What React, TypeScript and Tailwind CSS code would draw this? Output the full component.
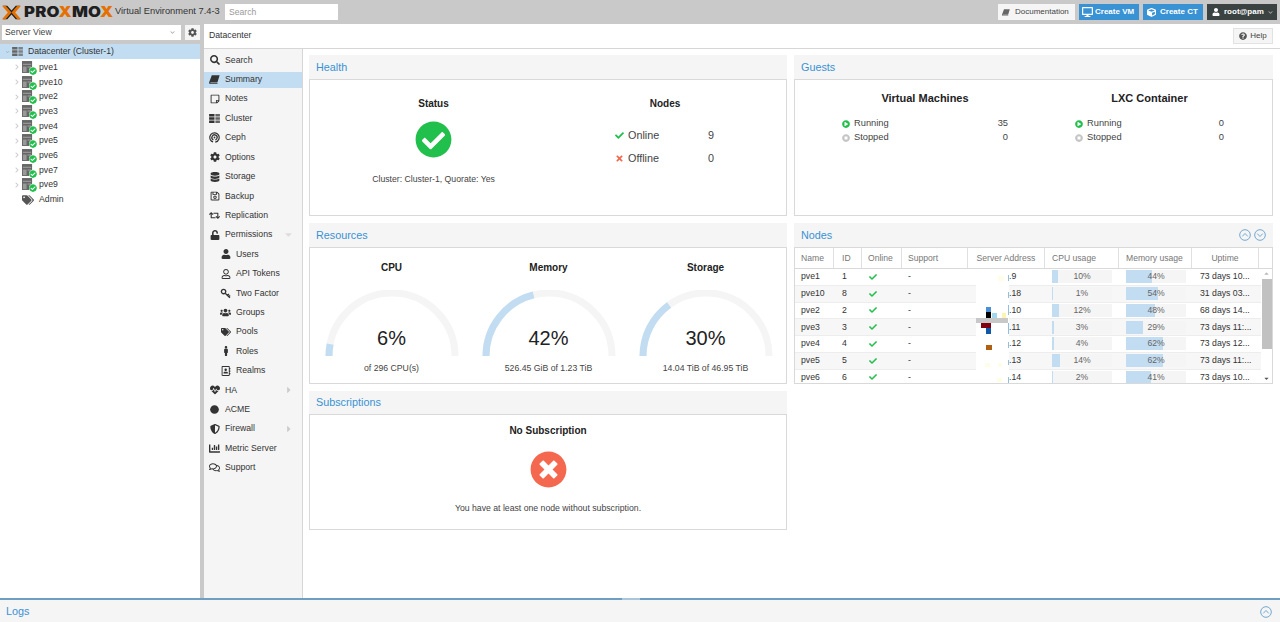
import React from "react";
import {
  FaSearch, FaRegStickyNote, FaCog, FaDatabase, FaRegSave, FaRetweet, FaUnlock, FaUser, FaRegUser,
  FaUsers, FaTags, FaMale, FaRegAddressBook, FaHeartbeat, FaCircle, FaShieldAlt, FaChartBar, FaRegComments,
  FaDesktop, FaCube, FaQuestionCircle, FaCheckCircle, FaCheck, FaTimes, FaTimesCircle, FaPlayCircle, FaStopCircle,
  FaChevronDown, FaChevronRight, FaCaretDown, FaCaretRight, FaCaretUp,
} from "react-icons/fa";

const Ceph = () => (
  <svg viewBox="0 0 20 20" className="w-[11px] h-[11px]" fill="none" stroke="#333" strokeWidth="2.2">
    <circle cx="10" cy="10" r="8.5" strokeDasharray="48 5.4" transform="rotate(108 10 10)" />
    <circle cx="10" cy="10" r="4.8" strokeDasharray="26 4.2" transform="rotate(115 10 10)" />
    <circle cx="10" cy="10" r="1.6" fill="#333" stroke="none" />
  </svg>
);

const SlantBook = ({ className }: { className: string }) => (
  <svg viewBox="0 0 12 10" className={className} fill="currentColor">
    <path d="M3 .3h8.7L9.2 8.4H1.9C.9 8.4.9 9.3 1.9 9.3h7.6l-.2.7H1.1C-.3 10-.2 8.2.5 7z" />
  </svg>
);

const ClusterIcon = ({ className }: { className: string }) => (
  <svg viewBox="0 0 12 10" className={className} fill="currentColor">
    <rect x="0" y="0" width="6" height="2.8" />
    <rect x="0" y="3.6" width="6" height="2.8" />
    <rect x="0" y="7.2" width="6" height="2.8" />
    <rect x="7" y="0" width="5" height="2.8" opacity="0.75" />
    <rect x="7" y="3.6" width="5" height="2.8" opacity="0.75" />
    <rect x="7" y="7.2" width="5" height="2.8" opacity="0.75" />
  </svg>
);

const NodeIcon = () => (
  <svg viewBox="0 0 12 13" className="w-[11px] h-[12px]">
    <rect width="11" height="13" fill="#666" />
    <rect x="1" y="3" width="9" height="1" fill="#aaa" />
    <rect x="1" y="6" width="4" height="6" fill="#999" />
    <rect x="6" y="6" width="4" height="1" fill="#aaa" />
  </svg>
);

const KeyIcon = () => (
  <svg viewBox="0 0 20 20" className="w-[11px] h-[11px]" fill="none" stroke="#333" strokeWidth="2.4">
    <circle cx="6.5" cy="6.5" r="4" />
    <path d="M9.5 9.5 18 18M13.5 13.5l2.8-2.4M16 16l2.4-2.2" />
  </svg>
);

const Logo = () => (
  <svg viewBox="0 0 36 28" className="w-[19px] h-[15px] shrink-0">
    <path d="M2 1h8l8 9 8-9h8L22 14l12 13h-8l-8-9-8 9H2l12-13z" fill="#1f1f1f" />
    <path d="M0 1h7l11 13L7 27H0l11-13z" fill="#e57000" />
    <path d="M36 1h-7L18 14l11 13h7L25 14z" fill="#e57000" />
  </svg>
);

const nav: { label: string; icon: React.ReactNode; sub?: boolean; chev?: "down" | "right"; selected?: boolean }[] = [
  { label: "Search", icon: <FaSearch /> },
  { label: "Summary", icon: <SlantBook className="w-[11px] h-[9px]" />, selected: true },
  { label: "Notes", icon: <FaRegStickyNote /> },
  { label: "Cluster", icon: <ClusterIcon className="w-[11px] h-[9px]" /> },
  { label: "Ceph", icon: <Ceph /> },
  { label: "Options", icon: <FaCog /> },
  { label: "Storage", icon: <FaDatabase /> },
  { label: "Backup", icon: <FaRegSave /> },
  { label: "Replication", icon: <FaRetweet className="w-[11px] h-[11px]" /> },
  { label: "Permissions", icon: <FaUnlock />, chev: "down" },
  { label: "Users", icon: <FaUser />, sub: true },
  { label: "API Tokens", icon: <FaRegUser />, sub: true },
  { label: "Two Factor", icon: <KeyIcon />, sub: true },
  { label: "Groups", icon: <FaUsers className="w-[11px] h-[11px]" />, sub: true },
  { label: "Pools", icon: <FaTags />, sub: true },
  { label: "Roles", icon: <FaMale />, sub: true },
  { label: "Realms", icon: <FaRegAddressBook />, sub: true },
  { label: "HA", icon: <FaHeartbeat />, chev: "right" },
  { label: "ACME", icon: <FaCircle className="w-[9px] h-[9px]" /> },
  { label: "Firewall", icon: <FaShieldAlt />, chev: "right" },
  { label: "Metric Server", icon: <FaChartBar className="w-[11px] h-[11px]" /> },
  { label: "Support", icon: <FaRegComments className="w-[11px] h-[11px]" /> },
];

const nodes = [
  { name: "pve1", id: 1, addr: ".9", cpu: 10, mem: 44, up: "73 days 10..." },
  { name: "pve10", id: 8, addr: ".18", cpu: 1, mem: 54, up: "31 days 03..." },
  { name: "pve2", id: 2, addr: ".10", cpu: 12, mem: 48, up: "68 days 14..." },
  { name: "pve3", id: 3, addr: ".11", cpu: 3, mem: 29, up: "73 days 11:..." },
  { name: "pve4", id: 4, addr: ".12", cpu: 4, mem: 62, up: "73 days 12..." },
  { name: "pve5", id: 5, addr: ".13", cpu: 14, mem: 62, up: "73 days 11:..." },
  { name: "pve6", id: 6, addr: ".14", cpu: 2, mem: 41, up: "73 days 10..." },
];

const TreeNode = ({ label }: { label: string }) => (
  <div className="h-[14.7px] flex items-center pl-[15px] text-[8.7px] text-[#333]">
    <FaChevronRight className="w-[4px] h-[6px] text-[#ccc] mr-[3px]" />
    <span className="relative w-[13px] h-[13px] mr-[4px] shrink-0">
      <NodeIcon />
      <FaCheckCircle className="absolute right-[-2px] bottom-[-1px] w-[8px] h-[8px] text-[#21bf4b] bg-white rounded-full" />
    </span>
    <span>{label}</span>
  </div>
);

const Panel = ({
  title, className, children, tools, head = "h-[24px]",
}: { title: string; className: string; children: React.ReactNode; tools?: React.ReactNode; head?: string }) => (
  <div className={`flex flex-col ${className}`}>
    <div className={`${head} shrink-0 bg-[#f5f5f5] flex items-center justify-between pl-[7px] pr-[7px] text-[10.8px] text-[#3892d4]`}>
      <span>{title}</span>
      {tools}
    </div>
    <div className="flex-1 min-h-0 overflow-hidden relative bg-white border border-[#d9d9d9]">{children}</div>
  </div>
);

const Gauge = ({ title, pct, sub }: { title: string; pct: number; sub: string }) => {
  const r = 63;
  const c = Math.PI * r;
  const d = `M${70 - r} 66 A${r} ${r} 0 0 1 ${70 + r} 66`;
  return (
    <div className="w-[157px] flex flex-col items-center">
      <div className="h-[13px] mt-[13px] leading-[13px] text-[10px] font-bold text-[#222]">{title}</div>
      <div className="relative w-[140px] h-[66px] mt-[16px]">
        <svg viewBox="0 0 140 66" className="w-[140px] h-[66px]" fill="none" strokeWidth="7">
          <path d={d} stroke="#f5f5f5" />
          <path d={d} stroke="#c2ddf2" strokeDasharray={`${(c * pct) / 100} ${c}`} />
        </svg>
        <div className="absolute left-0 right-0 top-[36px] text-center text-[20px] leading-[24px] text-[#222]">{pct}%</div>
      </div>
      <div className="mt-[6px] text-[8.7px] leading-[12px] text-[#444]">{sub}</div>
    </div>
  );
};

const GuestCol = ({ title, run, stop, className }: { title: string; run: number; stop: number; className: string }) => (
  <div className={`flex flex-col ${className}`}>
    <div className="text-center text-[11px] font-bold leading-[14px] text-[#222] mt-[11px] mb-[12px]">{title}</div>
    <div className="h-[14px] flex items-center text-[9.3px] text-[#444]">
      <FaPlayCircle className="w-[8px] h-[8px] text-[#21bf4b] mr-[4px]" />
      <span className="flex-1">Running</span>
      <span>{run}</span>
    </div>
    <div className="h-[14px] flex items-center text-[9.3px] text-[#444]">
      <FaStopCircle className="w-[8px] h-[8px] text-[#c4c4c4] mr-[4px]" />
      <span className="flex-1">Stopped</span>
      <span>{stop}</span>
    </div>
  </div>
);

const Bar = ({ pct, mem }: { pct: number; mem?: boolean }) => (
  <div className={`flex items-center ${mem ? "w-[73px] pl-[7px]" : "w-[74px] pl-[7px]"}`}>
    <div className="relative w-[60px] h-[13px] bg-[#f5f5f5] text-center text-[8.6px] leading-[13px] text-[#666]">
      <div className="absolute left-0 top-0 bottom-0 bg-[#c2ddf2]" style={{ width: `${pct}%` }} />
      <span className="relative">{pct}%</span>
    </div>
  </div>
);

const Tool = ({ up }: { up?: boolean }) => (
  <svg viewBox="0 0 14 14" className="w-[12px] h-[12px]" fill="none" stroke="#5d9cc9" strokeWidth="1">
    <circle cx="7" cy="7" r="6.2" />
    <path d={up ? "M3.8 8.6 7 5.2l3.2 3.4" : "M3.8 5.4 7 8.8l3.2-3.4"} />
  </svg>
);

const Head = ({ className, children }: { className: string; children: string }) => (
  <div className={`h-full flex items-center border-r border-[#e0e0e0] text-[8.6px] text-[#777] ${className}`}>{children}</div>
);

const marks = [
  "top-[6px] h-[6px] bg-[#8cc0e8]",
  "top-[23px] h-[6px] bg-[#8cc0e8]",
  "top-[36px] h-[10px] bg-[#8cc0e8]",
  "top-[54px] h-[11px] bg-[#8cc0e8]",
  "top-[73px] h-[6px] bg-[#8cc0e8]",
  "top-[91px] h-[5px] bg-[#8cc0e8]",
  "top-[108px] h-[6px] bg-[#8cc0e8]",
];

export default function App() {
  return (
    <div className="relative w-[1280px] h-[622px] overflow-hidden flex flex-col bg-[#c9c9c9] text-[#333] font-['Liberation_Sans',Arial,sans-serif]">
      {/* top bar */}
      <header className="h-[24px] shrink-0 flex items-center pl-[2px] pr-[3px]">
        <Logo />
        <span className="ml-[3px] w-[91px] text-[14.5px] font-black tracking-[0.2px] leading-none font-['Inter',sans-serif] text-[#1f1f1f] whitespace-nowrap">
          <span className="inline-block origin-left scale-x-[1.15]">
            PRO<span className="text-[#e57000]">X</span>MO<span className="text-[#e57000]">X</span>
          </span>
        </span>
        <span className="w-[110px] text-[9.3px] text-[#333] whitespace-nowrap">Virtual Environment 7.4-3</span>
        <div className="w-[113px] h-[16px] bg-white flex items-center pl-[4px] text-[8.6px] text-[#999]">Search</div>
        <div className="flex-1" />
        <div className="flex gap-[4px] text-[8px]">
          <div className="w-[77px] h-[16px] bg-[#f5f5f5] flex items-center pl-[4px] text-[#444] whitespace-nowrap">
            <SlantBook className="w-[8px] h-[7px] mr-[5px] text-[#666]" />
            Documentation
          </div>
          <div className="w-[60px] h-[16px] bg-[#3892d4] flex items-center pl-[3px] text-white font-bold whitespace-nowrap">
            <FaDesktop className="w-[11px] h-[10px] mr-[2px]" />
            Create VM
          </div>
          <div className="w-[60px] h-[16px] bg-[#3892d4] flex items-center pl-[4px] text-white font-bold whitespace-nowrap">
            <FaCube className="w-[9px] h-[9px] mr-[4px]" />
            Create CT
          </div>
          <div className="w-[70px] h-[16px] bg-[#3b4242] flex items-center pl-[4px] text-white font-bold whitespace-nowrap">
            <FaUser className="w-[8px] h-[8px] mr-[4px] ml-[1px]" />
            root@pam
            <FaChevronDown className="w-[5px] h-[5px] ml-auto mr-[4px] text-[#aaa]" />
          </div>
        </div>
      </header>

      <div className="flex-1 min-h-0 flex">
        {/* resource tree */}
        <aside className="w-[200px] shrink-0 flex flex-col">
          <div className="h-[20px] shrink-0 flex items-start pt-[1px]">
            <div className="ml-[2px] w-[179px] h-[15px] bg-white flex items-center justify-between pl-[3px] pr-[6px] text-[8.7px] text-[#444]">
              Server View
              <FaChevronDown className="w-[5px] h-[5px] text-[#aaa]" />
            </div>
            <div className="ml-[4px] w-[15px] h-[15px] bg-[#f5f5f5] flex items-center justify-center">
              <FaCog className="w-[9px] h-[9px] text-[#555]" />
            </div>
          </div>
          <div className="flex-1 bg-white">
            <div className="h-[15px] bg-[#c2ddf2] flex items-center pl-[5px] text-[8.7px] text-[#333]">
              <FaChevronDown className="w-[5px] h-[4px] text-[#9bb] mr-[1px]" />
              <ClusterIcon className="w-[11px] h-[9px] text-[#666] ml-[1px] mr-[5px]" />
              Datacenter (Cluster-1)
            </div>
            <div className="pt-[1px]">
              {["pve1", "pve10", "pve2", "pve3", "pve4", "pve5", "pve6", "pve7", "pve9"].map((n) => (
                <TreeNode key={n} label={n} />
              ))}
              <div className="h-[14.7px] flex items-center pl-[22px] text-[8.7px] text-[#333]">
                <FaTags className="w-[12px] h-[10px] text-[#555] mr-[5px]" />
                Admin
              </div>
            </div>
          </div>
        </aside>

        {/* center */}
        <div className="ml-[4px] flex-1 min-w-0 flex flex-col bg-white">
          <div className="h-[25px] shrink-0 border-b border-[#d6d6d6] flex items-center justify-between pl-[5px] pr-[7px] text-[8.7px]">
            Datacenter
            <div className="w-[40px] h-[16px] bg-[#f5f5f5] border border-[#e2e2e2] flex items-center justify-center text-[#444] text-[8px]">
              <FaQuestionCircle className="w-[8px] h-[8px] mr-[3px] text-[#555]" />
              Help
            </div>
          </div>
          <div className="flex-1 min-h-0 flex">
            <nav className="w-[99px] shrink-0 bg-[#f5f5f5] border-r border-[#d6d6d6] pt-[1.5px]">
              {nav.map((n) => (
                <div key={n.label} className="h-[19.42px] flex items-center">
                  <div className={`w-full h-[16px] flex items-center text-[8.7px] text-[#333] ${n.selected ? "bg-[#c2ddf2]" : ""} ${n.sub ? "pl-[16px]" : "pl-[5px]"}`}>
                    <span className="w-[11px] h-[11px] mr-[5px] flex items-center justify-center text-[10px] text-[#333] shrink-0">{n.icon}</span>
                    <span className="flex-1">{n.label}</span>
                    {n.chev === "down" && <FaCaretDown className="w-[11px] h-[11px] text-[#ddd] mr-[8px]" />}
                    {n.chev === "right" && <FaCaretRight className="w-[10px] h-[10px] text-[#ccc] mr-[8px]" />}
                  </div>
                </div>
              ))}
            </nav>

            <main className="flex-1 min-w-0 flex gap-[7px] pl-[6px] pr-[7px] pt-[6px]">
              <div className="w-[478px] flex flex-col gap-[7px]">
                <Panel title="Health" className="h-[161px]">
                  <div className="flex">
                    <div className="w-[247px] flex flex-col items-center">
                      <div className="mt-[17px] text-[10px] font-bold leading-[13px] text-[#222]">Status</div>
                      <FaCheckCircle className="mt-[11px] w-[37px] h-[37px] text-[#21bf4b]" />
                      <div className="mt-[15px] text-[8.7px] leading-[12px] text-[#444]">Cluster: Cluster-1, Quorate: Yes</div>
                    </div>
                    <div className="w-[216px] flex flex-col">
                      <div className="mt-[17px] text-center text-[10px] font-bold leading-[13px] text-[#222]">Nodes</div>
                      <div className="mt-[14px] h-[23px] flex items-center pl-[58px] text-[10.8px] text-[#444]">
                        <FaCheck className="w-[9px] h-[9px] text-[#21bf4b] mr-[4px]" />
                        <span className="w-[80px]">Online</span>
                        <span>9</span>
                      </div>
                      <div className="h-[23px] flex items-center pl-[58px] text-[10.8px] text-[#444]">
                        <FaTimes className="w-[9px] h-[9px] text-[#f4684f] mr-[4px]" />
                        <span className="w-[80px]">Offline</span>
                        <span>0</span>
                      </div>
                    </div>
                  </div>
                </Panel>
                <Panel title="Resources" className="h-[161px]">
                  <div className="flex pl-[3px]">
                    <Gauge title="CPU" pct={6} sub="of 296 CPU(s)" />
                    <Gauge title="Memory" pct={42} sub="526.45 GiB of 1.23 TiB" />
                    <Gauge title="Storage" pct={30} sub="14.04 TiB of 46.95 TiB" />
                  </div>
                </Panel>
                <Panel title="Subscriptions" className="h-[139px]" head="h-[23px]">
                  <div className="flex flex-col items-center">
                    <div className="mt-[9px] text-[10px] font-bold leading-[14px] text-[#222]">No Subscription</div>
                    <FaTimesCircle className="mt-[13px] w-[37px] h-[37px] text-[#f4684f]" />
                    <div className="mt-[14px] text-[8.7px] leading-[12px] text-[#444]">You have at least one node without subscription.</div>
                  </div>
                </Panel>
              </div>

              <div className="w-[479px] flex flex-col gap-[7px]">
                <Panel title="Guests" className="h-[161px]">
                  <div className="flex pl-[47px]">
                    <GuestCol title="Virtual Machines" run={35} stop={0} className="w-[166px]" />
                    <GuestCol title="LXC Container" run={0} stop={0} className="w-[149px] ml-[67px]" />
                  </div>
                </Panel>
                <Panel
                  title="Nodes"
                  className="h-[161px]"
                  tools={
                    <span className="flex gap-[3px]">
                      <Tool up />
                      <Tool />
                    </span>
                  }
                >
                  <div className="h-[21px] flex border-b border-[#d9d9d9]">
                    <Head className="w-[39px] pl-[6px]">Name</Head>
                    <Head className="w-[28px] pl-[8px]">ID</Head>
                    <Head className="w-[40px] pl-[6px]">Online</Head>
                    <Head className="w-[66px] pl-[6px]">Support</Head>
                    <Head className="w-[77px] justify-center">Server Address</Head>
                    <Head className="w-[74px] pl-[7px]">CPU usage</Head>
                    <Head className="w-[73px] pl-[7px]">Memory usage</Head>
                    <Head className="w-[67px] justify-center">Uptime</Head>
                  </div>
                  <div className="relative">
                    {nodes.map((n, i) => (
                      <div key={n.name} className={`h-[16.75px] flex items-center text-[8.7px] text-[#333] border-b border-[#ededed] ${i % 2 ? "bg-[#f7f7f7]" : "bg-white"}`}>
                        <div className="w-[39px] pl-[6px]">{n.name}</div>
                        <div className="w-[28px] pl-[8px]">{n.id}</div>
                        <div className="w-[40px] pl-[7px]">
                          <FaCheck className="w-[8px] h-[8px] text-[#21bf4b]" />
                        </div>
                        <div className="w-[66px] pl-[6px]">-</div>
                        <div className="w-[77px] pl-[41px]">{n.addr}</div>
                        <Bar pct={n.cpu} />
                        <Bar pct={n.mem} mem />
                        <div className="w-[67px] pl-[8px] whitespace-nowrap">{n.up}</div>
                      </div>
                    ))}
                    {/* redaction overlay on the address column */}
                    <div className="absolute left-[181px] top-0 w-[33px] h-[116px] bg-white">
                      {marks.map((m) => (
                        <div key={m} className={`absolute left-[32px] w-[1px] ${m}`} />
                      ))}
                      <div className="absolute left-[22px] top-[7px] w-[6px] h-[5px] bg-[#fffde8]" />
                      <div className="absolute left-[10px] top-[38px] w-[5px] h-[5px] bg-[#4a90d9]" />
                      <div className="absolute left-[10px] top-[43px] w-[5px] h-[6px] bg-black" />
                      <div className="absolute left-[16px] top-[44px] w-[5px] h-[5px] bg-[#a0d8f0]" />
                      <div className="absolute left-[26px] top-[44px] w-[4px] h-[5px] bg-[#fff5b0]" />
                      <div className="absolute left-0 top-[49px] w-[32px] h-[5px] bg-[#c8c8c8]" />
                      <div className="absolute left-[5px] top-[54px] w-[10px] h-[5px] bg-[#800010]" />
                      <div className="absolute left-[10px] top-[59px] w-[5px] h-[6px] bg-[#1058a8]" />
                      <div className="absolute left-[10px] top-[76px] w-[6px] h-[5px] bg-[#b06010]" />
                      <div className="absolute left-[9px] top-[94px] w-[5px] h-[4px] bg-[#fffde8]" />
                      <div className="absolute left-[22px] top-[94px] w-[4px] h-[4px] bg-[#fffde8]" />
                      <div className="absolute left-[21px] top-[109px] w-[5px] h-[4px] bg-[#fffde8]" />
                    </div>
                    {/* scrollbar */}
                    <div className="absolute right-0 top-0 h-[116px] w-[11px] bg-white flex flex-col items-center">
                      <FaCaretUp className="w-[7px] h-[7px] mt-[1px] text-[#bbb]" />
                      <div className="w-[10px] h-[70px] mt-[2px] bg-[#c1c1c1]" />
                      <div className="flex-1" />
                      <FaCaretDown className="w-[7px] h-[7px] mb-[3px] text-[#555]" />
                    </div>
                  </div>
                </Panel>
              </div>
            </main>
          </div>
        </div>
      </div>

      {/* logs */}
      <footer className="h-[24px] shrink-0 bg-[#f5f5f5] border-t-2 border-[#6f9fc0] flex items-center justify-between pl-[6px] pr-[8px] pt-[1px] text-[10.8px] text-[#3892d4]">
        Logs
        <Tool up />
      </footer>
      {/* splitter grip */}
      <div className="absolute left-[622px] top-[598px] w-[18px] h-[2px] bg-[#a9c6da]" />
    </div>
  );
}
